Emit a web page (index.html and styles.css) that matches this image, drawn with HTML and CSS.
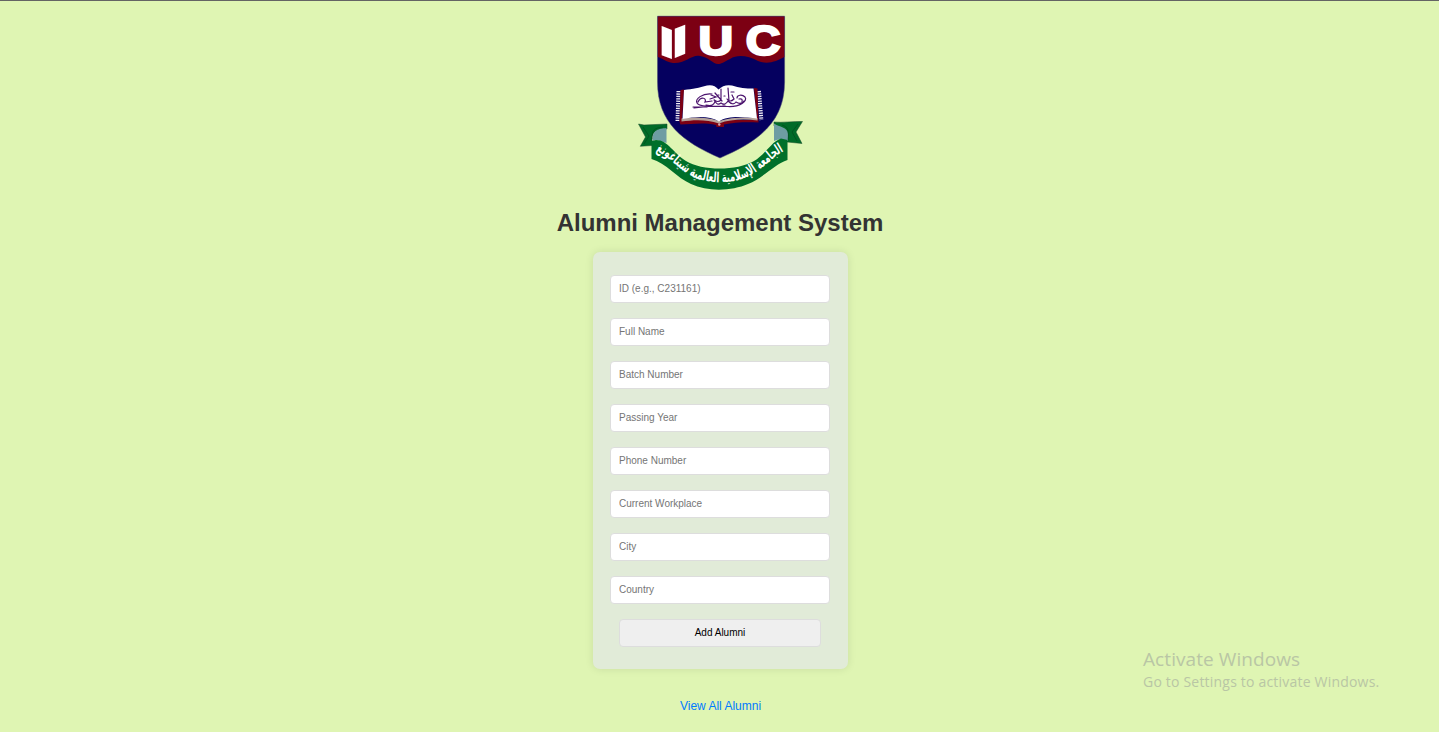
FILE: index.html
```html
<!DOCTYPE html>
<html lang="en">
<head>
<meta charset="utf-8">
<title>Alumni Management System</title>
<link rel="stylesheet" href="styles.css">
</head>
<body>
<header class="header">
  <svg class="logo" viewBox="0 0 180 200" width="180" height="200" role="img" aria-label="IIUC crest">
    <!-- shield -->
    <path fill="#05005f" stroke="#4b4a72" stroke-width=".5" d="M27.5 16.2H154.600V82C154.600 123 127 142 90 158C53 142 27.500 123 27.500 82Z"/>
    <path fill="#7c0013" d="M27.800 16.400H154.300V57C147 61 138 65 128 61C118 56 108 54 100 59C94 62 91 64 88 64C83 64 79 57 70 56C62 54 55 64 43 63C36 62 32 58 27.800 57Z"/>
    <!-- lettering -->
    <g class="crest-letters">
      <text transform="matrix(1.76 .66 0 1.06 27 53.400)">I</text>
      <text transform="matrix(1.8 -.7 0 1.06 40 59.700)">I</text>
      <text class="crest-heavy" transform="matrix(1.2 0 0 1.03 68.500 55.300)">U</text>
      <text class="crest-heavy" transform="matrix(1.2 0 0 1.06 115.800 55)">C</text>
    </g>
    <!-- book -->
    <path fill="none" stroke="#f3eef5" stroke-width="4" stroke-dasharray="1.300 1.100" d="M48.500 91L47.500 121M129 91L131.400 120"/>
    <path fill="#7c0013" d="M50.500 90L54 89.500 52 120 81 120 90 123 98 120 127 120 124 88 127.500 88.500 128.500 122.500C118 122 105 122 94 124.500V127H86.500L86 125C74 122 62 124 50.500 124.500L49.500 122Z"/>
    <path fill="#b5a39a" d="M51.500 118.500C63 117 76 117 89 121C101 117 115 117 127.500 118V120.500C115 119 101 119 89 123.500C76 119 63 120 51.500 121.500Z"/>
    <path fill="#fff" d="M54 90C63 89 69 88 77 85.500Q84 84 88.500 89.500Q94 84 102 85.500C109 88 116 88.500 123.500 88.500L127 118.500C115 117 98 115 89 121.500C78 115 65 117 52.500 119Z"/>
    <circle cx="89.300" cy="124.500" r="1.200" fill="#d4a4aa"/>
    <!-- emblem on the open pages -->
    <g fill="none" stroke="#4c146e" stroke-width="1.200" stroke-linecap="round">
      <path d="M82 94C72 93 65 99 67 103C70 108 87 106 98 106.500C110 107 118 101 115 97C112 94 107 95 107 98M68 102C71 96 77 98 75 102L82 101M76 105Q84 107 85 101Q87 106 91 103Q95 106 98 101Q103 106 106 102Q111 105 114 101"/>
      <path d="M91 89V100Q88 103 84 100M98 88L99 101M85 93L92 101M102 95L104 99Q100 103 97 99M109 99Q113 98 112 102M81 95L86 97L80 99M101 92H104M63 107H77M64 108L73 107M88 95H89M94 96H95M93 105H95"/>
    </g>
    <!-- ribbon -->
    <path fill="#006b28" stroke="#194a2a" stroke-width=".5" d="M8.500 124L14 125 37 124V129C29 129 24 130 22 137L22 145.500 10.300 146.300 15.500 137Z"/>
    <path fill="#6e9da3" d="M22.500 141C22 129 29 129 36.500 128V143L30 141Q26 139 22.500 141Z"/>
    <path fill="#006b28" stroke="#194a2a" stroke-width=".5" d="M144 122C152 123 163 121 172.500 121.500L166 132 172 143.500 157 142C157 130 151 130 144 126Z"/>
    <path fill="#6e9da3" d="M144 123.500C149 127 158 127 158 134V141L150 139 144 141Z"/>
    <path fill="none" stroke="#003f1b" stroke-width=".5" d="M13 127L19 136 14 144M33 127C24 128 22 130 22 139M152 125C158 127 159 130 158 140M168 124L162 132 167 141"/>
    <path fill="#00702a" d="M21.500 141L26 140C38 140 44 154 56 161C72 171 107 171 124 161C137 153 141 142 151 138.500L157.500 140V160C145 164 133 178 118 184C102 191 78 192 61 184C47 178 36 163 21.500 159Z"/>
    <path id="motto-line" fill="none" d="M21 150C38 153 47 170 65 178C82 184 103 184 119 176C135 168 141 157 158 149"/>
    <text class="crest-motto" direction="rtl"><textPath href="#motto-line" startOffset="50%" text-anchor="middle" textLength="146" lengthAdjust="spacingAndGlyphs">الجامعة الإسلامية العالمية شيتاغونغ</textPath></text>
  </svg>
  <h1 class="title">Alumni Management System</h1>
</header>
<main class="main">
  <form class="card">
    <input class="field" type="text" placeholder="ID (e.g., C231161)">
    <input class="field" type="text" placeholder="Full Name">
    <input class="field" type="text" placeholder="Batch Number">
    <input class="field" type="text" placeholder="Passing Year">
    <input class="field" type="text" placeholder="Phone Number">
    <input class="field" type="text" placeholder="Current Workplace">
    <input class="field" type="text" placeholder="City">
    <input class="field" type="text" placeholder="Country">
    <button class="submit" type="button">Add Alumni</button>
  </form>
  <a class="view-link" href="#">View All Alumni</a>
</main>
<aside class="watermark">
  <div class="watermark-title">Activate Windows</div>
  <div class="watermark-text">Go to Settings to activate Windows.</div>
</aside>
</body>
</html>
```

FILE: styles.css
```css
* { box-sizing: border-box; }
body {
  margin: 0;
  height: 732px;
  overflow: hidden;
  background: #dff5b3;
  box-shadow: inset 0 1px #646464;
  font-family: "Liberation Sans", Arial, sans-serif;
}
.header {
  display: flex;
  flex-direction: column;
  align-items: center;
  padding-left: 1px;
}
.logo { display: block; }
.crest-letters {
  fill: #fff;
  font: bold 40px "Liberation Sans", sans-serif;
}
.crest-heavy {
  stroke: #fff;
  stroke-width: 2.2px;
}
.crest-motto {
  fill: #fff;
  font: bold 14px "DejaVu Sans", sans-serif;
}
.title {
  margin: 9px 0 0;
  color: #333;
  font-size: 24px;
  line-height: 28px;
}
.main {
  display: flex;
  flex-direction: column;
  align-items: center;
  padding: 15px 0 0 2px;
}
.card {
  display: flex;
  flex-direction: column;
  align-items: center;
  gap: 15px;
  width: 255px;
  height: 417px;
  padding: 23px 18px 23px 16px;
  background: #e1ebd8;
  border-radius: 7px;
  box-shadow: 0 0 8px rgba(0, 0, 0, .1);
}
.field,
.submit {
  flex: none;
  height: 28px;
  border: 1px solid #ddd;
  border-radius: 4px;
  font: 10px "Liberation Sans", Arial, sans-serif;
}
.field {
  width: 220px;
  padding: 0 8px 1px 8.5px;
  background: #fff;
}
.field::placeholder { color: #757575; }
.submit {
  width: 202px;
  padding: 0 0 1px 1px;
  background: #efefef;
  color: #000;
}
.view-link {
  margin-top: 30px;
  color: #007bff;
  font-size: 12px;
  line-height: 14px;
  text-decoration: none;
}
.watermark {
  position: absolute;
  left: 1143px;
  top: 647px;
  color: #b9c6a5;
  font-family: "Open Sans", "Noto Sans", sans-serif;
  white-space: nowrap;
}
.watermark-title {
  font-size: 19px;
  line-height: 24px;
  letter-spacing: .08px;
}
.watermark-text {
  font-size: 14px;
  line-height: 21px;
  letter-spacing: .2px;
}
```
